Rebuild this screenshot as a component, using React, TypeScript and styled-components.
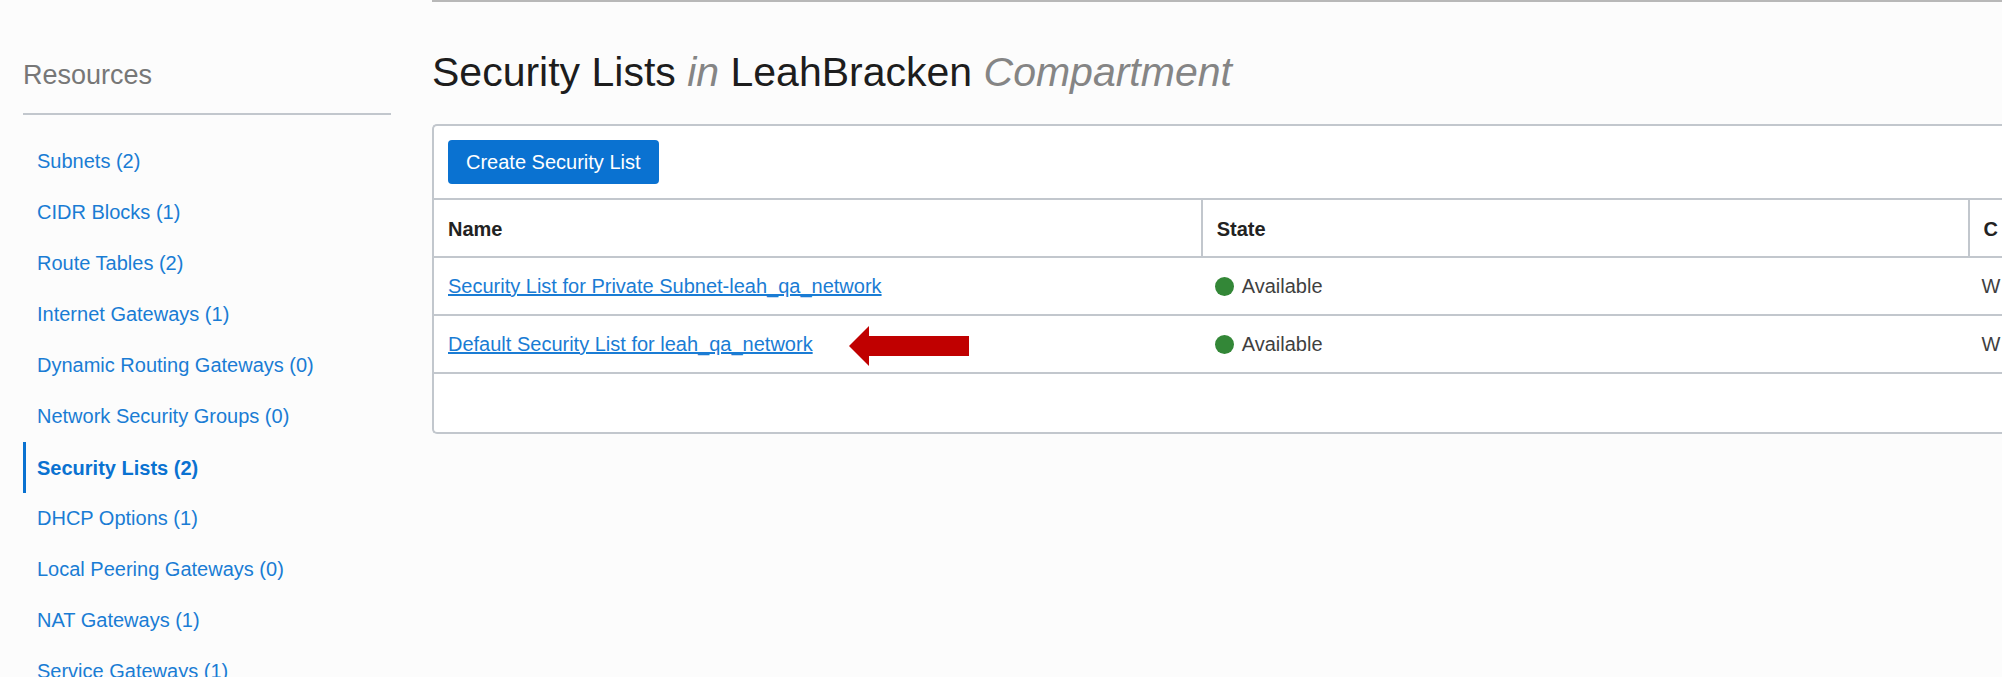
import React from "react";
import styled, { createGlobalStyle } from "styled-components";

const line = "#c2c7cd";
const blue = "#0a72d1";

const GlobalStyle = createGlobalStyle`
  * { box-sizing: border-box; }
  body {
    margin: 0;
    background: #fcfcfc;
    color: #3f3f3f;
    font: 20px/24px "Liberation Sans", Arial, sans-serif;
  }
`;

const Page = styled.div`
  display: flex;
  align-items: flex-start;
  height: 100vh;
  overflow: hidden;
`;

const Sidebar = styled.aside`
  flex: none;
  width: 368px;
  margin: 0 41px 0 23px;
  padding-top: 58px;
`;

const SidebarTitle = styled.h2`
  margin: 0 0 21px;
  padding-bottom: 21px;
  border-bottom: 2px solid ${line};
  color: #777;
  font-size: 27px;
  font-weight: 300;
  line-height: 34px;
`;

const ResourceList = styled.ul`
  margin: 0;
  padding: 0;
  list-style: none;
`;

const ResourceLink = styled.a<{ $active?: boolean }>`
  display: flex;
  align-items: center;
  height: 51px;
  padding-left: 11px;
  padding-bottom: ${(p) => (p.$active ? 0 : 2)}px;
  border-left: 3px solid ${(p) => (p.$active ? blue : "transparent")};
  color: ${(p) => (p.$active ? blue : "#1a7cd4")};
  font-weight: ${(p) => (p.$active ? 700 : 400)};
  text-decoration: none;
  white-space: nowrap;
`;

const Main = styled.main`
  flex: 1;
  min-width: 0;
  border-top: 2px solid #b8b8b8;
`;

const Title = styled.h1`
  margin: 0;
  padding: 46px 0 28px;
  color: #1d1d1d;
  font-size: 41px;
  font-weight: 400;
  line-height: 48px;
  white-space: nowrap;

  em { color: #858585; }
`;

const Panel = styled.section`
  border: 2px solid ${line};
  border-right: 0;
  border-radius: 5px 0 0 5px;
  background: #fff;
  overflow: hidden;
`;

const Toolbar = styled.div`
  padding: 14px;
`;

const PrimaryButton = styled.button`
  display: block;
  height: 44px;
  padding: 0 18px;
  border: 0;
  border-radius: 4px;
  background: ${blue};
  color: #fff;
  font: inherit;
`;

const Table = styled.table`
  width: 100%;
  table-layout: fixed;
  border-collapse: separate;
  border-spacing: 0;
  border-bottom: 2px solid ${line};
`;

const WideColumn = styled.col`
  width: 48.9%;
`;

const cell = `
  position: relative;
  height: 58px;
  border-top: 2px solid ${line};
  text-align: left;
  white-space: nowrap;
`;

const HeaderCell = styled.th`
  ${cell}
  padding: 2px 0 0 14px;
  color: #222;

  & + & { border-left: 2px solid ${line}; }
`;

const Cell = styled.td`
  ${cell}
  padding: 0 0 0 14px;
`;

const ListLink = styled.a`
  color: #1a7cd4;
  text-decoration: underline;
  text-decoration-thickness: 2px;
`;

const Status = styled.div`
  display: flex;
  align-items: center;
  gap: 8px;

  &::before {
    content: "";
    width: 19px;
    height: 19px;
    border-radius: 50%;
    background: #338737;
  }
`;

const PanelFooter = styled.footer`
  height: 58px;
`;

/* Callout drawn over the row it points at. */
const Callout = styled.svg`
  position: absolute;
  top: 10px;
  left: 415px;
  width: 120px;
  height: 40px;
`;

const resources = [
  { name: "Subnets", count: 2 },
  { name: "CIDR Blocks", count: 1 },
  { name: "Route Tables", count: 2 },
  { name: "Internet Gateways", count: 1 },
  { name: "Dynamic Routing Gateways", count: 0 },
  { name: "Network Security Groups", count: 0 },
  { name: "Security Lists", count: 2, active: true },
  { name: "DHCP Options", count: 1 },
  { name: "Local Peering Gateways", count: 0 },
  { name: "NAT Gateways", count: 1 },
  { name: "Service Gateways", count: 1 },
];

const securityLists = [
  { name: "Security List for Private Subnet-leah_qa_network", state: "Available", created: "W" },
  { name: "Default Security List for leah_qa_network", state: "Available", created: "W", marked: true },
];

const Arrow = () => (
  <Callout viewBox="0 0 120 40" aria-hidden="true">
    <path d="M0 20 20 0V10H120V30H20V40Z" fill="#c00000" />
  </Callout>
);

export default function App() {
  return (
    <>
      <GlobalStyle />
      <Page>
        <Sidebar>
          <SidebarTitle>Resources</SidebarTitle>
          <nav aria-label="Resources">
            <ResourceList>
              {resources.map((r) => (
                <li key={r.name}>
                  <ResourceLink href="#" $active={r.active} aria-current={r.active ? "page" : undefined}>
                    {`${r.name} (${r.count})`}
                  </ResourceLink>
                </li>
              ))}
            </ResourceList>
          </nav>
        </Sidebar>
        <Main>
          <Title>
            Security Lists <em>in</em> LeahBracken <em>Compartment</em>
          </Title>
          <Panel>
            <Toolbar>
              <PrimaryButton type="button">Create Security List</PrimaryButton>
            </Toolbar>
            <Table>
              <colgroup>
                <WideColumn />
                <WideColumn />
                <col />
              </colgroup>
              <thead>
                <tr>
                  <HeaderCell scope="col">Name</HeaderCell>
                  <HeaderCell scope="col">State</HeaderCell>
                  <HeaderCell scope="col">C</HeaderCell>
                </tr>
              </thead>
              <tbody>
                {securityLists.map((l) => (
                  <tr key={l.name}>
                    <Cell>
                      <ListLink href="#">{l.name}</ListLink>
                      {l.marked && <Arrow />}
                    </Cell>
                    <Cell>
                      <Status>{l.state}</Status>
                    </Cell>
                    <Cell>{l.created}</Cell>
                  </tr>
                ))}
              </tbody>
            </Table>
            <PanelFooter />
          </Panel>
        </Main>
      </Page>
    </>
  );
}
